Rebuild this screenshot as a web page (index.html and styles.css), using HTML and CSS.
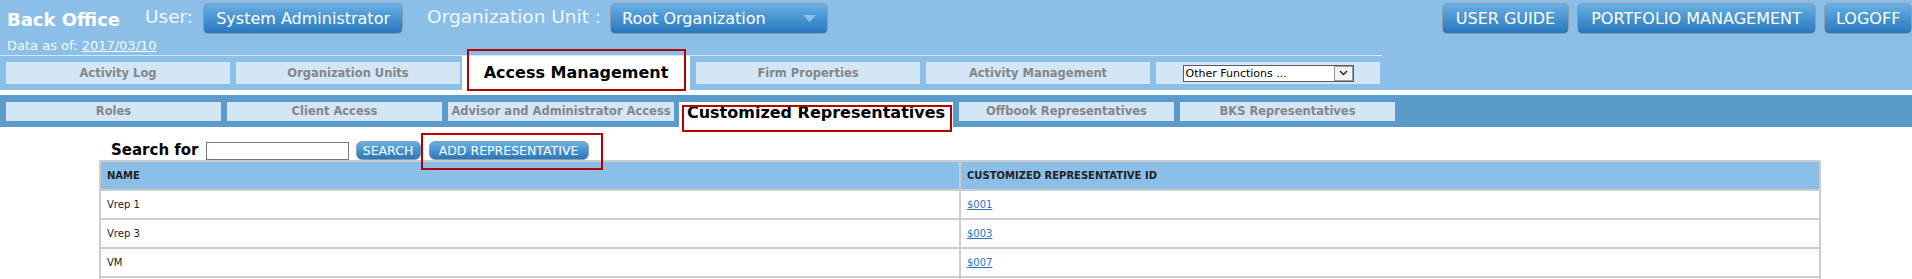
FILE: index.html
```html
<!DOCTYPE html>
<html lang="en">
<head>
    <meta charset="UTF-8">
    <meta name="viewport" content="width=device-width, initial-scale=1.0">
    <title>Back Office - Customized Representatives</title>
    <link rel="stylesheet" href="styles.css">
</head>
<body>
    <header class="topbar">
        <div class="topbar-main">
            <span class="brand">Back Office</span>
            <span class="label user-label">User:</span>
            <button class="btn btn-lg user-btn">System Administrator</button>
            <span class="label org-label">Organization Unit :</span>
            <button class="btn btn-lg org-btn">
                <span>Root Organization</span>
                <svg class="caret" width="13" height="7" viewBox="0 0 13 7"><path d="M0 0 H13 L6.5 7 Z" fill="#8fbde4"/></svg>
            </button>
            <nav class="top-links">
                <button class="btn btn-lg guide-btn">USER GUIDE</button>
                <button class="btn btn-lg portfolio-btn">PORTFOLIO MANAGEMENT</button>
                <button class="btn btn-lg logoff-btn">LOGOFF</button>
            </nav>
        </div>
        <div class="data-date">Data as of: <a href="#">2017/03/10</a></div>
        <ul class="main-tabs">
            <li class="tab">Activity Log</li>
            <li class="tab">Organization Units</li>
            <li class="tab active"><span class="mark"></span>Access Management</li>
            <li class="tab">Firm Properties</li>
            <li class="tab">Activity Management</li>
            <li class="tab">
                <div class="fake-select">
                    <span class="fake-select-text">Other Functions ...</span>
                    <span class="fake-select-arrow">
                        <svg width="9" height="6" viewBox="0 0 9 6"><path d="M1 1 L4.5 4.5 L8 1" fill="none" stroke="#222" stroke-width="1.4"/></svg>
                    </span>
                </div>
            </li>
        </ul>
    </header>

    <div class="sub-bar">
        <ul class="sub-tabs">
            <li class="sub-tab">Roles</li>
            <li class="sub-tab">Client Access</li>
            <li class="sub-tab wide">Advisor and Administrator Access</li>
            <li class="sub-tab active"><span class="mark"></span>Customized Representatives</li>
            <li class="sub-tab">Offbook Representatives</li>
            <li class="sub-tab">BKS Representatives</li>
        </ul>
    </div>

    <main class="content">
        <div class="search-row">
            <label for="search-text">Search for</label>
            <input type="text" id="search-text">
            <button class="btn btn-sm search-btn">SEARCH</button>
            <span class="mark-wrap">
                <button class="btn btn-sm add-btn">ADD REPRESENTATIVE</button>
                <span class="mark"></span>
            </span>
        </div>

        <table class="rep-table">
            <thead>
                <tr>
                    <th>NAME</th>
                    <th>CUSTOMIZED REPRESENTATIVE ID</th>
                </tr>
            </thead>
            <tbody>
                <tr>
                    <td>Vrep 1</td>
                    <td><a href="#">$001</a></td>
                </tr>
                <tr>
                    <td>Vrep 3</td>
                    <td><a href="#">$003</a></td>
                </tr>
                <tr>
                    <td>VM</td>
                    <td><a href="#">$007</a></td>
                </tr>
                <tr>
                    <td></td>
                    <td></td>
                </tr>
            </tbody>
        </table>
    </main>
</body>
</html>
```

FILE: styles.css
```css
body {
    margin: 0;
    padding: 0;
    font-family: "DejaVu Sans", Verdana, sans-serif;
    background-color: #fff;
}
.topbar {
    background-color: #8cbfe7;
    height: 90px;
}
.topbar-main {
    display: flex;
    align-items: center;
    height: 31px;
    padding-top: 3px;
}
.brand {
    margin-left: 7px;
    font-size: 18px;
    font-weight: bold;
    color: #fff;
    position: relative;
    top: 1px;
}
.label {
    font-size: 18.5px;
    color: #eef6fc;
    position: relative;
    top: -2px;
}
.user-label {
    margin-left: 25px;
}
.user-btn {
    margin-left: 10px;
    width: 200px;
}
.org-label {
    margin-left: 24px;
}
.org-btn {
    margin-left: 9px;
    width: 218px;
    display: flex;
    align-items: center;
    justify-content: space-between;
    padding: 0 7px 0 11px;
    font-size: 15px;
}
.top-links {
    margin-left: auto;
    display: flex;
    gap: 8px;
}
.btn {
    font-family: inherit;
    color: #fff;
    background: linear-gradient(#68b0e4, #2877bc);
    border: 1px solid #8e9ca8;
    border-radius: 5px;
    cursor: pointer;
}
.btn-lg {
    height: 31px;
    padding: 0 11px;
    font-size: 16px;
}
.guide-btn {
    width: 127px;
}
.portfolio-btn {
    width: 239px;
}
.logoff-btn {
    width: 88px;
}
.data-date {
    height: 21px;
    padding-left: 7px;
    box-sizing: border-box;
    padding-top: 3px;
    line-height: 18px;
    font-size: 13px;
    color: #f5f9fd;
}
.data-date a {
    color: #f5f9fd;
}
.main-tabs {
    list-style: none;
    margin: 0;
    padding: 6px 0 0 6px;
    width: 1382px;
    height: 35px;
    box-sizing: border-box;
    border-top: 1px solid #d3e7f6;
    display: flex;
    gap: 6px;
}
.tab {
    width: 224px;
    height: 22px;
    line-height: 22px;
    text-align: center;
    background-color: #d2e6f5;
    color: #868686;
    font-size: 11.5px;
    font-weight: bold;
    display: flex;
    align-items: center;
    justify-content: center;
}
.tab.active {
    position: relative;
    margin-top: -6px;
    margin-left: -4px;
    width: 228px;
    height: 34px;
    background-color: #fff;
    color: #000;
    font-size: 16px;
}
.mark {
    position: absolute;
    border: 2px solid #b30000;
    pointer-events: none;
}
.tab.active .mark {
    left: 5px;
    top: -7px;
    right: 4px;
    bottom: -1px;
}
.fake-select {
    width: 171px;
    height: 17px;
    box-sizing: border-box;
    border: 1px solid #5c5c5c;
    background: #fff;
    display: flex;
    align-items: stretch;
}
.fake-select-text {
    flex: 1;
    padding-left: 2px;
    font-size: 11px;
    font-weight: normal;
    color: #000;
    line-height: 15px;
    text-align: left;
}
.fake-select-arrow {
    width: 19px;
    box-sizing: border-box;
    border: 1px solid #9a9a9a;
    background: #f2f2f2;
    display: flex;
    align-items: center;
    justify-content: center;
}
.sub-bar {
    margin-top: 5px;
    height: 32px;
    box-sizing: border-box;
    padding: 7px 0 0 6px;
    background-color: #5b9bcb;
}
.sub-tabs {
    list-style: none;
    margin: 0;
    padding: 0;
    display: flex;
    gap: 6px;
}
.sub-tab {
    width: 215px;
    height: 19px;
    line-height: 19px;
    text-align: center;
    background-color: #d2e6f5;
    color: #868686;
    font-size: 11.5px;
    font-weight: bold;
    white-space: nowrap;
}
.sub-tab.wide {
    width: 226px;
}
.sub-tab.active {
    position: relative;
    width: 274px;
    height: 25px;
    line-height: 21px;
    margin-left: -1px;
    background-color: #fff;
    color: #000;
    font-size: 16px;
}
.sub-tab.active .mark {
    left: 3px;
    top: 3px;
    right: 1px;
    bottom: -5px;
}
.content {
    padding-left: 99px;
}
.search-row {
    display: flex;
    align-items: center;
    gap: 7px;
    height: 19px;
    margin-top: 14px;
    padding-left: 12px;
}
.search-row label {
    font-size: 15px;
    font-weight: bold;
    color: #000;
    position: relative;
    top: -1px;
}
.search-row input {
    width: 143px;
    height: 18px;
    box-sizing: border-box;
    border: 1px solid #777;
    padding: 0 2px;
}
.btn-sm {
    height: 19px;
    padding: 0 6px;
    font-size: 12.5px;
    border-radius: 6px;
    line-height: 17px;
}
.search-btn {
    width: 65px;
}
.mark-wrap {
    position: relative;
    margin-left: 1px;
    display: flex;
}
.add-btn {
    width: 160px;
}
.mark-wrap .mark {
    left: -8px;
    top: -8px;
    right: -14px;
    bottom: -10px;
}
.rep-table {
    width: 1722px;
    margin-top: 0;
    border-spacing: 2px;
    background-color: #cccccc;
    table-layout: fixed;
}
.rep-table th {
    height: 27px;
    padding: 0 6px;
    background-color: #8cbfe7;
    color: #222;
    font-size: 10px;
    font-weight: bold;
    text-align: left;
}
.rep-table td {
    height: 27px;
    padding: 0 6px;
    background-color: #fff;
    color: #1a1a1a;
    font-size: 10px;
}
.rep-table td a {
    color: #2d72bd;
}
```
